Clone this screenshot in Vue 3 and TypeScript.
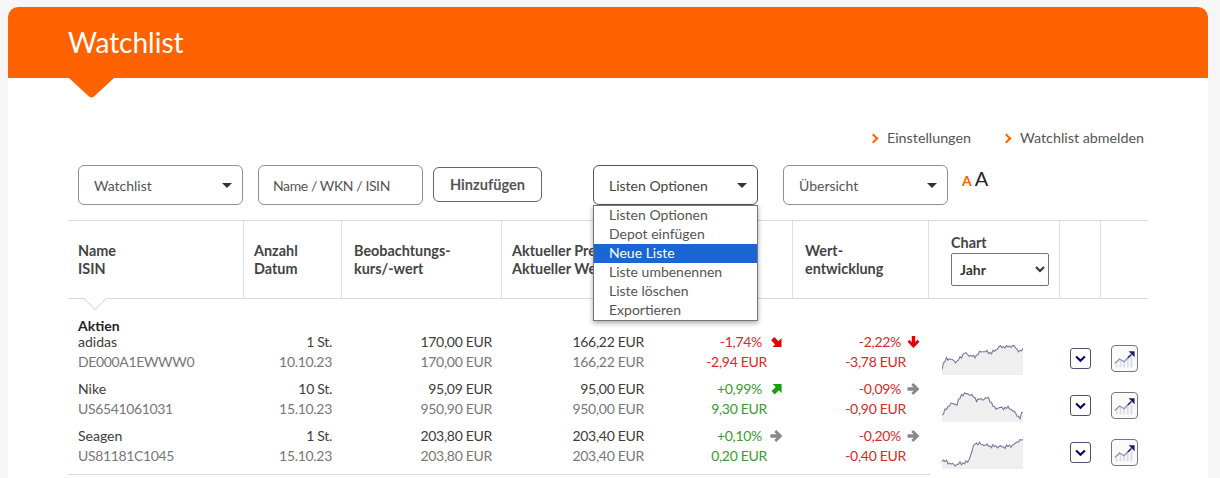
<script setup lang="ts">
interface Row {
  name: string
  isin: string
  qty: string
  date: string
  buy: string
  buyVal: string
  cur: string
  curVal: string
  pct: string
  pctEur: string
  pctDir: 'down-right' | 'up-right' | 'right'
  pctCls: string
  perf: string
  perfEur: string
  perfDir: 'down' | 'right'
  line: string
}

// turns a few anchor points into a jagged price line
function jagged(anchors: [number, number][], seed: number): string {
  const pts: string[] = []
  for (let x = 0; x <= 81; x += 1.5) {
    const i = anchors.findIndex((a, n) => n > 0 && a[0] >= x)
    const a = anchors[i - 1]
    const b = anchors[i]
    const t = (x - a[0]) / (b[0] - a[0])
    const noise = Math.sin(x * 2.3 + seed) * 1.1 + Math.sin(x * 5.1 + seed * 2) * 0.9
    const y = a[1] + (b[1] - a[1]) * t + noise
    pts.push(`${x},${Math.min(29, Math.max(0.5, y)).toFixed(1)}`)
  }
  return pts.join(' ')
}

const rows: Row[] = [
  {
    name: 'adidas', isin: 'DE000A1EWWW0', qty: '1 St.', date: '10.10.23',
    buy: '170,00 EUR', buyVal: '170,00 EUR', cur: '166,22 EUR', curVal: '166,22 EUR',
    pct: '-1,74%', pctEur: '-2,94 EUR', pctDir: 'down-right', pctCls: 'neg',
    perf: '-2,22%', perfEur: '-3,78 EUR', perfDir: 'down',
    line: jagged([[0, 23], [2, 18], [5, 13], [15, 17], [22, 8], [32, 12], [40, 6], [50, 8], [57, 2], [72, 1], [78, 7], [81, 4]], 1),
  },
  {
    name: 'Nike', isin: 'US6541061031', qty: '10 St.', date: '15.10.23',
    buy: '95,09 EUR', buyVal: '950,90 EUR', cur: '95,00 EUR', curVal: '950,00 EUR',
    pct: '+0,99%', pctEur: '9,30 EUR', pctDir: 'up-right', pctCls: 'pos',
    perf: '-0,09%', perfEur: '-0,90 EUR', perfDir: 'right',
    line: jagged([[0, 23], [8, 12], [15, 12], [20, 2], [28, 2], [35, 8], [47, 6], [52, 16], [68, 16], [78, 26], [81, 19]], 4),
  },
  {
    name: 'Seagen', isin: 'US81181C1045', qty: '1 St.', date: '15.10.23',
    buy: '203,80 EUR', buyVal: '203,80 EUR', cur: '203,40 EUR', curVal: '203,40 EUR',
    pct: '+0,10%', pctEur: '0,20 EUR', pctDir: 'right', pctCls: 'pos',
    perf: '-0,20%', perfEur: '-0,40 EUR', perfDir: 'right',
    line: jagged([[0, 21], [12, 26], [26, 23], [33, 4], [48, 7], [62, 8], [72, 6], [77, 1], [81, 1]], 7),
  },
]

const menu = ['Listen Optionen', 'Depot einfügen', 'Neue Liste', 'Liste umbenennen', 'Liste löschen', 'Exportieren']

const STRAIGHT = 'M.5 4.3h6.2L4.3 2 6.3 0l6.1 6-6.1 6-2-2 2.4-2.3H.5z'
const CORNER = 'M2.6 1h9v9L8.9 7.3l-4.1 4.1-3.2-3.2 4.1-4.1z'

function arrowPath(dir: string) {
  return dir === 'right' || dir === 'down' ? STRAIGHT : CORNER
}
</script>

<template>
  <div class="page">
    <div class="card">
      <header class="banner">
        <h1>Watchlist</h1>
        <svg class="notch" viewBox="0 0 45 20"><path d="M0 0h45L25 18.6q-2.5 2-5 0z" fill="#ff6200" /></svg>
      </header>

      <div class="content">
        <div class="links">
          <a><i class="chev"></i>Einstellungen</a>
          <a><i class="chev"></i>Watchlist abmelden</a>
        </div>

        <div class="toolbar">
          <div class="fake-select w-watch">Watchlist<b></b></div>
          <div class="search">Name / WKN / ISIN</div>
          <button class="add">Hinzufügen</button>
          <div class="options-wrap">
            <div class="fake-select open">Listen Optionen<b></b></div>
            <ul class="menu">
              <li v-for="m in menu" :key="m" :class="{ active: m === 'Neue Liste' }">{{ m }}</li>
            </ul>
          </div>
          <div class="fake-select w-view">Übersicht<b></b></div>
          <div class="font-size"><span class="small">A</span><span class="big">A</span></div>
        </div>

        <div class="grid head">
          <div class="th">Name<br />ISIN</div>
          <div class="th">Anzahl<br />Datum</div>
          <div class="th wide-pad">Beobachtungs-<br />kurs/-wert</div>
          <div class="th">Aktueller Preis<br />Aktueller Wert</div>
          <div class="th"></div>
          <div class="th wide-pad">Wert-<br />entwicklung</div>
          <div class="th chart-th">
            Chart
            <select class="range"><option>Jahr</option></select>
          </div>
          <div class="th"></div>
          <div class="th"></div>
          <span class="head-notch"></span>
        </div>

        <div class="group">Aktien</div>
        <div v-for="r in rows" :key="r.isin" class="grid row">
          <div class="cell">
            <div>{{ r.name }}</div>
            <div class="muted isin">{{ r.isin }}</div>
          </div>
          <div class="cell num">
            <div>{{ r.qty }}</div>
            <div class="muted">{{ r.date }}</div>
          </div>
          <div class="cell num">
            <div>{{ r.buy }}</div>
            <div class="muted">{{ r.buyVal }}</div>
          </div>
          <div class="cell num cur">
            <div>{{ r.cur }}</div>
            <div class="muted">{{ r.curVal }}</div>
          </div>
          <div class="cell num pct" :class="r.pctCls">
            <div class="top">
              {{ r.pct }}
              <svg class="arrow" :class="`to-${r.pctDir}`" viewBox="0 0 13 12"><path :d="arrowPath(r.pctDir)" /></svg>
            </div>
            <div>{{ r.pctEur }}</div>
          </div>
          <div class="cell num perf neg">
            <div class="top">
              {{ r.perf }}
              <svg class="arrow" :class="`to-${r.perfDir}`" viewBox="0 0 13 12"><path :d="arrowPath(r.perfDir)" /></svg>
            </div>
            <div>{{ r.perfEur }}</div>
          </div>
          <div class="cell spark-cell">
            <svg class="spark" viewBox="0 0 81 30">
              <polygon :points="`0,30 ${r.line} 81,30`" fill="#efeff0" />
              <polyline :points="r.line" fill="none" stroke="#767a9c" stroke-width="1.1" />
            </svg>
          </div>
          <div class="cell btn-cell">
            <span class="toggle">
              <svg viewBox="0 0 12 8"><path d="M1.2 1.2 6 6l4.8-4.8" fill="none" stroke="#000066" stroke-width="2.2" /></svg>
            </span>
          </div>
          <div class="cell btn-cell">
            <span class="chart-btn">
              <svg viewBox="0 0 24 22">
                <path d="M2 20v-3h2v3zm4 0v-7h2v7zm4 0v-6h2v6zm4 0v-9h2v9zm4 0V8h2v12z" fill="#d9dbe8" />
                <path d="M1 16l5-5 5 3 4-4" fill="none" stroke="#8d90ab" stroke-width="1.5" />
                <path d="M15 10l4-4" fill="none" stroke="#1c1c66" stroke-width="1.6" />
                <path d="M16 2.5h6.5V9z" fill="#1c1c66" />
              </svg>
            </span>
          </div>
        </div>
        <div class="bottom-rule"></div>
      </div>
    </div>
  </div>
</template>

<style>
html,
body {
  margin: 0;
  background: #f6f6f6;
  overflow: hidden;
}
</style>

<style scoped>
.page {
  padding: 7px 12px 0 8px;
  height: 471px;
  overflow: hidden;
  font-family: Lato, "Open Sans", sans-serif;
  font-size: 14px;
  color: #3c3c3c;
}

.card {
  background: #fff;
  border-radius: 10px 10px 0 0;
  height: 100%;
}

.banner {
  position: relative;
  height: 71px;
  background: #ff6200;
  border-radius: 10px 10px 0 0;
  display: flex;
  align-items: center;
  padding-left: 60px;
}

.banner h1 {
  margin: -1px 0 0;
  font-size: 28px;
  font-weight: 400;
  color: #fff;
}

.notch {
  position: absolute;
  left: 61px;
  top: 71px;
  width: 45px;
  height: 20px;
}

.content {
  padding: 0 60px;
}

.links {
  display: flex;
  justify-content: flex-end;
  gap: 32px;
  padding: 51px 4px 0 0;
  height: 36px;
  line-height: 18px;
  color: #555;
  font-size: 14.3px;
}

.links a {
  display: flex;
  align-items: center;
  height: 18px;
}

.chev {
  width: 5px;
  height: 5px;
  border-top: 2px solid #ff6200;
  border-right: 2px solid #ff6200;
  transform: rotate(45deg);
  margin-right: 10px;
}

.toolbar {
  display: flex;
  align-items: flex-start;
  padding-left: 10px;
  height: 55px;
}

.fake-select,
.search {
  box-sizing: border-box;
  width: 165px;
  height: 40px;
  border: 1px solid #8f8f8f;
  border-radius: 6px;
  display: flex;
  align-items: center;
  padding-left: 15px;
  color: #555;
  position: relative;
  background: #fff;
}

.fake-select b {
  position: absolute;
  right: 10px;
  top: 17px;
  border-left: 5px solid transparent;
  border-right: 5px solid transparent;
  border-top: 5px solid #333;
}

.search {
  margin-left: 15px;
  padding-left: 14px;
  letter-spacing: -0.4px;
}

.add {
  box-sizing: border-box;
  margin: 2px 0 0 10px;
  width: 109px;
  height: 35px;
  border: 1px solid #666;
  border-radius: 6px;
  background: #fff;
  font: 700 14.6px Lato, sans-serif;
  color: #555;
  padding: 0;
}

.options-wrap {
  position: relative;
  margin-left: 51px;
}

.fake-select.open {
  border-color: #555;
  color: #444;
}

.menu {
  position: absolute;
  left: 0;
  top: 40px;
  z-index: 5;
  box-sizing: border-box;
  width: 165px;
  margin: 0;
  padding: 0;
  list-style: none;
  background: #fff;
  border: 1px solid #767676;
  box-shadow: 0 2px 5px rgba(0, 0, 0, 0.35);
  color: #555;
}

.menu li {
  height: 19px;
  line-height: 18px;
  padding-left: 15px;
}

.menu li.active {
  background: #1a66d2;
  color: #fff;
}

.w-view {
  margin-left: 25px;
}

.font-size {
  margin-left: 14px;
  line-height: 26px;
  height: 26px;
  display: flex;
  align-items: baseline;
}

.font-size .small {
  color: #ff6200;
  font-size: 14px;
  font-weight: 700;
  margin-right: 3px;
}

.font-size .big {
  color: #222;
  font-size: 20px;
}

.grid {
  display: grid;
  grid-template-columns: 176px 98px 160px 158px 133px 136px 131px 41px 47px;
}

.head {
  position: relative;
  height: 77px;
  border-top: 1px solid #d9d9dc;
  border-bottom: 1px solid #d9d9dc;
}

.th {
  border-right: 1px solid #e0e0e4;
  padding: 21px 0 0 10px;
  font-weight: 700;
  font-size: 14.4px;
  color: #444;
  line-height: 18px;
  white-space: nowrap;
}

.th.wide-pad {
  padding-left: 12px;
}

.th:nth-child(9) {
  border-right: 0;
}

.chart-th {
  padding: 13px 0 0 22px;
}

.range {
  display: block;
  margin-top: 1px;
  box-sizing: border-box;
  width: 98px;
  height: 33px;
  background: #fff;
  border: 1px solid #767676;
  border-radius: 2px;
  font: 700 14px Lato, sans-serif;
  color: #333;
  padding-left: 4px;
}

.head-notch {
  position: absolute;
  left: 19px;
  bottom: -9px;
  width: 15px;
  height: 15px;
  background: #fff;
  border-right: 1px solid #dcdce0;
  border-bottom: 1px solid #dcdce0;
  transform: rotate(45deg);
}

.group {
  margin: 20px 0 0 10px;
  font-weight: 700;
  line-height: 13px;
  color: #222;
}

.row {
  height: 47px;
  line-height: 19.5px;
}

.cell {
  white-space: nowrap;
}

.cell:first-child {
  padding-left: 10px;
}

.num {
  text-align: right;
  padding-right: 10px;
  letter-spacing: -0.3px;
}

.cur {
  padding-right: 16px;
}

.muted {
  color: #777;
}

.isin {
  letter-spacing: -0.35px;
}

.neg {
  color: #d62a2a;
}

.pos {
  color: #3b9a31;
}

.pct {
  padding-right: 26px;
}

.perf {
  padding-right: 23px;
}

.top {
  position: relative;
  padding-right: 5px;
}

.arrow {
  position: absolute;
  top: 4px;
  width: 13px;
  height: 12px;
  fill: #888;
}

.pct .arrow {
  right: -16px;
}

.perf .arrow {
  right: -14px;
}

.arrow.to-down {
  fill: #e60000;
  transform: rotate(90deg);
}

.arrow.to-down-right {
  fill: #e60000;
  transform: rotate(90deg);
}

.arrow.to-up-right {
  fill: #16a016;
}

.spark-cell {
  padding: 13px 0 0 13px;
}

.spark {
  display: block;
  width: 81px;
  height: 30px;
}

.btn-cell {
  padding-top: 16px;
}

.toggle {
  display: flex;
  align-items: center;
  justify-content: center;
  box-sizing: border-box;
  width: 21px;
  height: 21px;
  margin-left: 10px;
  border: 1px solid #4d5170;
  border-radius: 3px;
}

.toggle svg {
  width: 11px;
  height: 8px;
}

.chart-btn {
  display: flex;
  align-items: center;
  justify-content: center;
  box-sizing: border-box;
  width: 27px;
  height: 27px;
  margin: -3px 0 0 10px;
  border: 1px solid #777;
  border-radius: 4px;
  background: #fafafa;
}

.chart-btn svg {
  width: 22px;
  height: 20px;
}

.bottom-rule {
  width: 862px;
  margin-top: 1px;
  border-top: 1px solid #d9d9dc;
}
</style>
